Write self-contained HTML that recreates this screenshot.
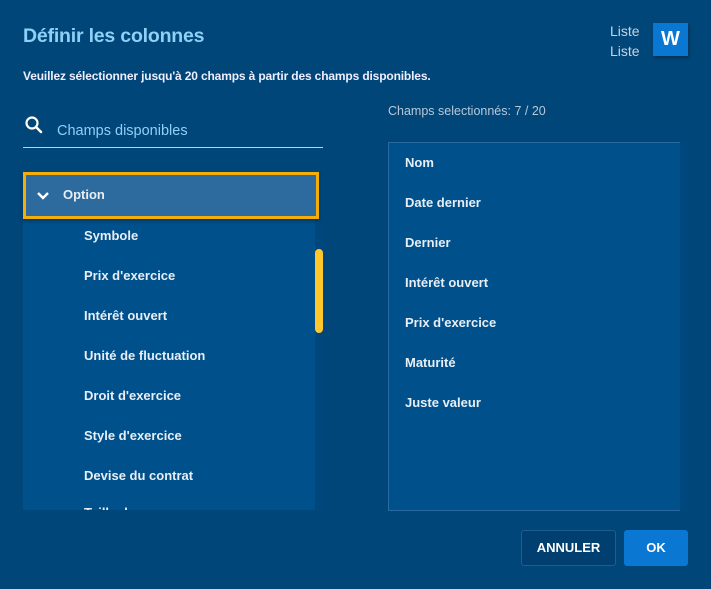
<!DOCTYPE html>
<html><head><meta charset="utf-8"><style>
*{margin:0;padding:0;box-sizing:border-box}
body{width:711px;height:589px;background:#004679;font-family:"Liberation Sans",sans-serif;color:#fff;position:relative;overflow:hidden}
.a{position:absolute}
h1{position:absolute;left:23px;top:25px;font-size:19.5px;color:#8fd0f7;font-weight:bold;letter-spacing:-0.2px}
.sub{left:23px;top:69px;font-size:12px;font-weight:bold;color:#eef;letter-spacing:-0.15px}
.item{position:absolute;font-size:13px;font-weight:bold;color:#e8eef5}
</style></head><body>
<h1>Définir les colonnes</h1>
<div class="a" style="left:610px;top:21px;font-size:14px;color:#c8d3de;line-height:20px">Liste<br>Liste</div>
<div class="a" style="left:653px;top:23px;width:35px;height:33px;background:#0a78d2;font-weight:bold;font-size:20px;text-align:center;line-height:33px;box-shadow:1px 2px 3px rgba(0,0,0,.3)">W</div>
<div class="a sub">Veuillez sélectionner jusqu'à 20 champs à partir des champs disponibles.</div>
<svg class="a" style="left:24px;top:115px" width="20" height="20" viewBox="0 0 20 20"><circle cx="8" cy="8" r="5.5" fill="none" stroke="#fff" stroke-width="2.2"/><path d="M12 12l5 5" stroke="#fff" stroke-width="2.5" stroke-linecap="round"/></svg>
<div class="a" style="left:57px;top:123px;font-size:14.5px;color:#8fd0f7">Champs disponibles</div>
<div class="a" style="left:23px;top:147px;width:300px;height:1px;background:#c5d0dc"></div>
<div class="a" style="left:23px;top:175px;width:292px;height:335px;background:#00508c"></div>
<div class="a" style="left:315px;top:175px;width:8px;height:335px;background:#00477e"></div>
<div class="a" style="left:315px;top:249px;width:8px;height:84px;border-radius:4px;background:#ffc72c"></div>
<div class="a" style="left:23px;top:172px;width:296px;height:47px;background:#2d6a9e;border:3px solid #f5ad0a;box-shadow:0 2px 4px rgba(0,0,0,.3)"></div>
<svg class="a" style="left:36px;top:190px" width="14" height="12" viewBox="0 0 14 12"><path d="M2 3l5 5 5-5" fill="none" stroke="#fff" stroke-width="2.4"/></svg>
<div class="item" style="left:63px;top:187px">Option</div>
<div class="item" style="left:84px;top:228px">Symbole</div>
<div class="item" style="left:84px;top:268px">Prix d'exercice</div>
<div class="item" style="left:84px;top:308px">Intérêt ouvert</div>
<div class="item" style="left:84px;top:348px">Unité de fluctuation</div>
<div class="item" style="left:84px;top:388px">Droit d'exercice</div>
<div class="item" style="left:84px;top:428px">Style d'exercice</div>
<div class="item" style="left:84px;top:468px">Devise du contrat</div>
<div class="a" style="left:84px;top:506px;width:60px;height:4px;overflow:hidden"><div class="item" style="left:0;top:-1px">Taille du</div></div>
<div class="a" style="left:388px;top:104px;font-size:12.5px;color:#b8c8d8">Champs selectionnés: 7 / 20</div>
<div class="a" style="left:388px;top:142px;width:292px;height:369px;background:#00508c;border:1px solid #2a6aa0;border-right:none"></div>
<div class="a" style="left:680px;top:142px;width:8px;height:369px;background:#00477e"></div>
<div class="item" style="left:405px;top:155px">Nom</div>
<div class="item" style="left:405px;top:195px">Date dernier</div>
<div class="item" style="left:405px;top:235px">Dernier</div>
<div class="item" style="left:405px;top:275px">Intérêt ouvert</div>
<div class="item" style="left:405px;top:315px">Prix d'exercice</div>
<div class="item" style="left:405px;top:355px">Maturité</div>
<div class="item" style="left:405px;top:395px">Juste valeur</div>
<div class="a" style="left:521px;top:530px;width:95px;height:36px;border:1px solid #1d5d92;border-radius:3px;background:#003f70;font-weight:bold;font-size:13px;text-align:center;line-height:34px">ANNULER</div>
<div class="a" style="left:624px;top:530px;width:64px;height:36px;border-radius:3px;background:#0a78d2;font-weight:bold;font-size:13px;text-align:center;line-height:36px">OK</div>
</body></html>
